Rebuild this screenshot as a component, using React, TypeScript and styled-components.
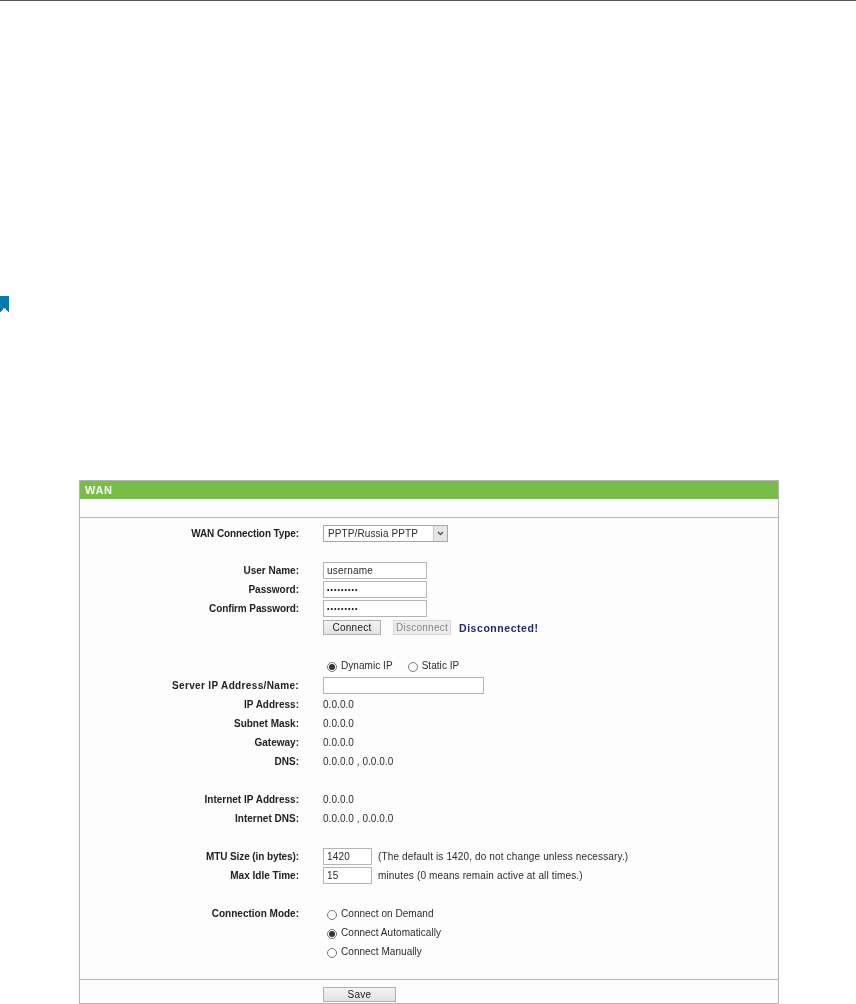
import React from "react";
import styled, { createGlobalStyle } from "styled-components";

const Global = createGlobalStyle`
  html, body { margin: 0; padding: 0; background: #fff; }
  body { font-family: "Liberation Sans", Arial, sans-serif; }
`;

const Page = styled.div`
  width: 856px;
  height: 1004px;
  overflow: hidden;
  display: flex;
  flex-direction: column;
  align-items: flex-start;
`;
const TopRule = styled.div`
  width: 100%;
  height: 1px;
  background: #555;
  flex: none;
`;
const BookmarkIcon = styled.svg`
  display: block;
  margin-top: 295px;
  width: 9px;
  height: 16px;
  flex: none;
`;
const Panel = styled.div`
  margin: 168px 0 0 79px;
  width: 700px;
  height: 524px;
  box-sizing: border-box;
  border: 1px solid #b4b4b4;
  background: #fcfdfc;
  flex: none;
  display: flex;
  flex-direction: column;
  font-size: 10px;
  color: #222;
  filter: blur(0.3px);
`;
const Title = styled.div`
  height: 18px;
  background: #78bc49;
  color: #fff;
  font-weight: bold;
  font-size: 11px;
  letter-spacing: 0.6px;
  line-height: 18px;
  padding-left: 5px;
  flex: none;
`;
const Spacer = styled.div<{ $h: number }>`
  height: ${(p) => p.$h}px;
  flex: none;
`;
const Divider = styled.div`
  height: 1px;
  margin-bottom: 1px;
  background: #a8c0ac;
  flex: none;
`;
const Body = styled.div`
  display: flex;
  flex-direction: column;
  padding-top: 5px;
  flex: 1;
`;
const Row = styled.div`
  height: 19px;
  display: grid;
  grid-template-columns: 219px 1fr;
  column-gap: 24px;
  align-items: center;
  flex: none;
`;
const Label = styled.div<{ $track?: number }>`
  text-align: right;
  font-weight: bold;
  font-size: 10px;
  letter-spacing: ${(p) => p.$track ?? 0}px;
  color: #222;
  white-space: nowrap;
`;
const Value = styled.div`
  display: flex;
  align-items: center;
  white-space: nowrap;
  font-size: 10px;
  letter-spacing: 0.05px;
  color: #2c2c2c;
`;
const Select = styled.div`
  width: 125px;
  height: 17px;
  box-sizing: border-box;
  border: 1px solid #a8a8a8;
  background: #fff;
  display: flex;
  align-items: center;
  justify-content: space-between;
  padding-left: 4px;
  font-size: 10px;
  letter-spacing: 0.1px;
`;
const SelectArrow = styled.div`
  width: 13px;
  height: 15px;
  background: #e6e6e6;
  border-left: 1px solid #c8c8c8;
  display: flex;
  align-items: center;
  justify-content: center;
`;
const Field = styled.div<{ $w: number }>`
  width: ${(p) => p.$w}px;
  height: 17px;
  box-sizing: border-box;
  border: 1px solid #b5b5b5;
  background: #fff;
  display: flex;
  align-items: center;
  padding-left: 3px;
  font-size: 10px;
  letter-spacing: 0.2px;
  color: #2c2c2c;
`;
const Dots = styled.span`
  font-size: 7px;
  letter-spacing: 1.05px;
  color: #111;
  font-weight: bold;
`;
const Button = styled.div<{ $w: number; $off?: boolean }>`
  width: ${(p) => p.$w}px;
  height: 15px;
  box-sizing: border-box;
  border: 1px solid ${(p) => (p.$off ? "#d8d8d8" : "#b0b0b0")};
  background: ${(p) => (p.$off ? "#ececec" : "linear-gradient(#f4f4f4, #e2e2e2)")};
  color: ${(p) => (p.$off ? "#888" : "#222")};
  display: flex;
  align-items: center;
  justify-content: center;
  font-size: 10px;
  letter-spacing: 0.25px;
`;
const ButtonRow = styled.div`
  display: flex;
  align-items: center;
  gap: 12px;
`;
const Status = styled.span`
  margin-left: -4px;
  font-weight: bold;
  font-size: 10.5px;
  letter-spacing: 0.55px;
  color: #23277c;
`;
const Radio = styled.span<{ $on?: boolean }>`
  width: 10px;
  height: 10px;
  box-sizing: border-box;
  border-radius: 50%;
  border: 1px solid #777;
  background: #fff;
  display: inline-flex;
  align-items: center;
  justify-content: center;
  margin: 3px 4px 0 4px;
  flex: none;
  &::after {
    content: "";
    width: 6px;
    height: 6px;
    border-radius: 50%;
    background: ${(p) => (p.$on ? "#333" : "transparent")};
  }
`;
const RadioGap = styled.span`
  width: 11px;
`;
const Hint = styled.span`
  margin-left: 6px;
  letter-spacing: 0.14px;
`;
const FooterRule = styled(Divider)`
  margin-top: 18px;
`;
const Footer = styled.div`
  flex: 1;
  display: flex;
  align-items: flex-end;
  padding: 0 0 1px 243px;
`;

const Line = ({ label, track, children }: { label?: string; track?: number; children?: React.ReactNode }) => (
  <Row>
    <Label $track={track}>{label}</Label>
    <Value>{children}</Value>
  </Row>
);

export default function App() {
  return (
    <Page>
      <Global />
      <TopRule />
      <BookmarkIcon viewBox="0 0 9 16">
        <path d="M0 0H9V16H8V15H7V14H6V12.5H3V14H2V15H1V16H0Z" fill="#0a77ae" />
      </BookmarkIcon>
      <Panel>
        <Title>WAN</Title>
        <Spacer $h={18} />
        <Divider />
        <Body>
          <Line label="WAN Connection Type:" track={-0.1}>
            <Select>
              PPTP/Russia PPTP
              <SelectArrow>
                <svg width="7" height="5" viewBox="0 0 7 5">
                  <path d="M1 1L3.5 3.5L6 1" fill="none" stroke="#555" strokeWidth="1.4" />
                </svg>
              </SelectArrow>
            </Select>
          </Line>
          <Spacer $h={18} />
          <Line label="User Name:"><Field $w={104}>username</Field></Line>
          <Line label="Password:"><Field $w={104}><Dots>•••••••••</Dots></Field></Line>
          <Line label="Confirm Password:" track={-0.1}><Field $w={104}><Dots>•••••••••</Dots></Field></Line>
          <Line>
            <ButtonRow>
              <Button $w={58}>Connect</Button>
              <Button $w={58} $off>Disconnect</Button>
              <Status>Disconnected!</Status>
            </ButtonRow>
          </Line>
          <Spacer $h={19} />
          <Line>
            <Radio $on />Dynamic IP<RadioGap /><Radio />Static IP
          </Line>
          <Spacer $h={1} />
          <Line label="Server IP Address/Name:" track={0.35}><Field $w={161} /></Line>
          <Line label="IP Address:">0.0.0.0</Line>
          <Line label="Subnet Mask:">0.0.0.0</Line>
          <Line label="Gateway:">0.0.0.0</Line>
          <Line label="DNS:">0.0.0.0 , 0.0.0.0</Line>
          <Spacer $h={19} />
          <Line label="Internet IP Address:">0.0.0.0</Line>
          <Line label="Internet DNS:">0.0.0.0 , 0.0.0.0</Line>
          <Spacer $h={19} />
          <Line label="MTU Size (in bytes):" track={-0.1}>
            <Field $w={49}>1420</Field>
            <Hint>(The default is 1420, do not change unless necessary.)</Hint>
          </Line>
          <Line label="Max Idle Time:">
            <Field $w={49}>15</Field>
            <Hint>minutes (0 means remain active at all times.)</Hint>
          </Line>
          <Spacer $h={19} />
          <Line label="Connection Mode:"><Radio />Connect on Demand</Line>
          <Line><Radio $on />Connect Automatically</Line>
          <Line><Radio />Connect Manually</Line>
          <FooterRule />
          <Footer>
            <Button $w={73}>Save</Button>
          </Footer>
        </Body>
      </Panel>
    </Page>
  );
}
